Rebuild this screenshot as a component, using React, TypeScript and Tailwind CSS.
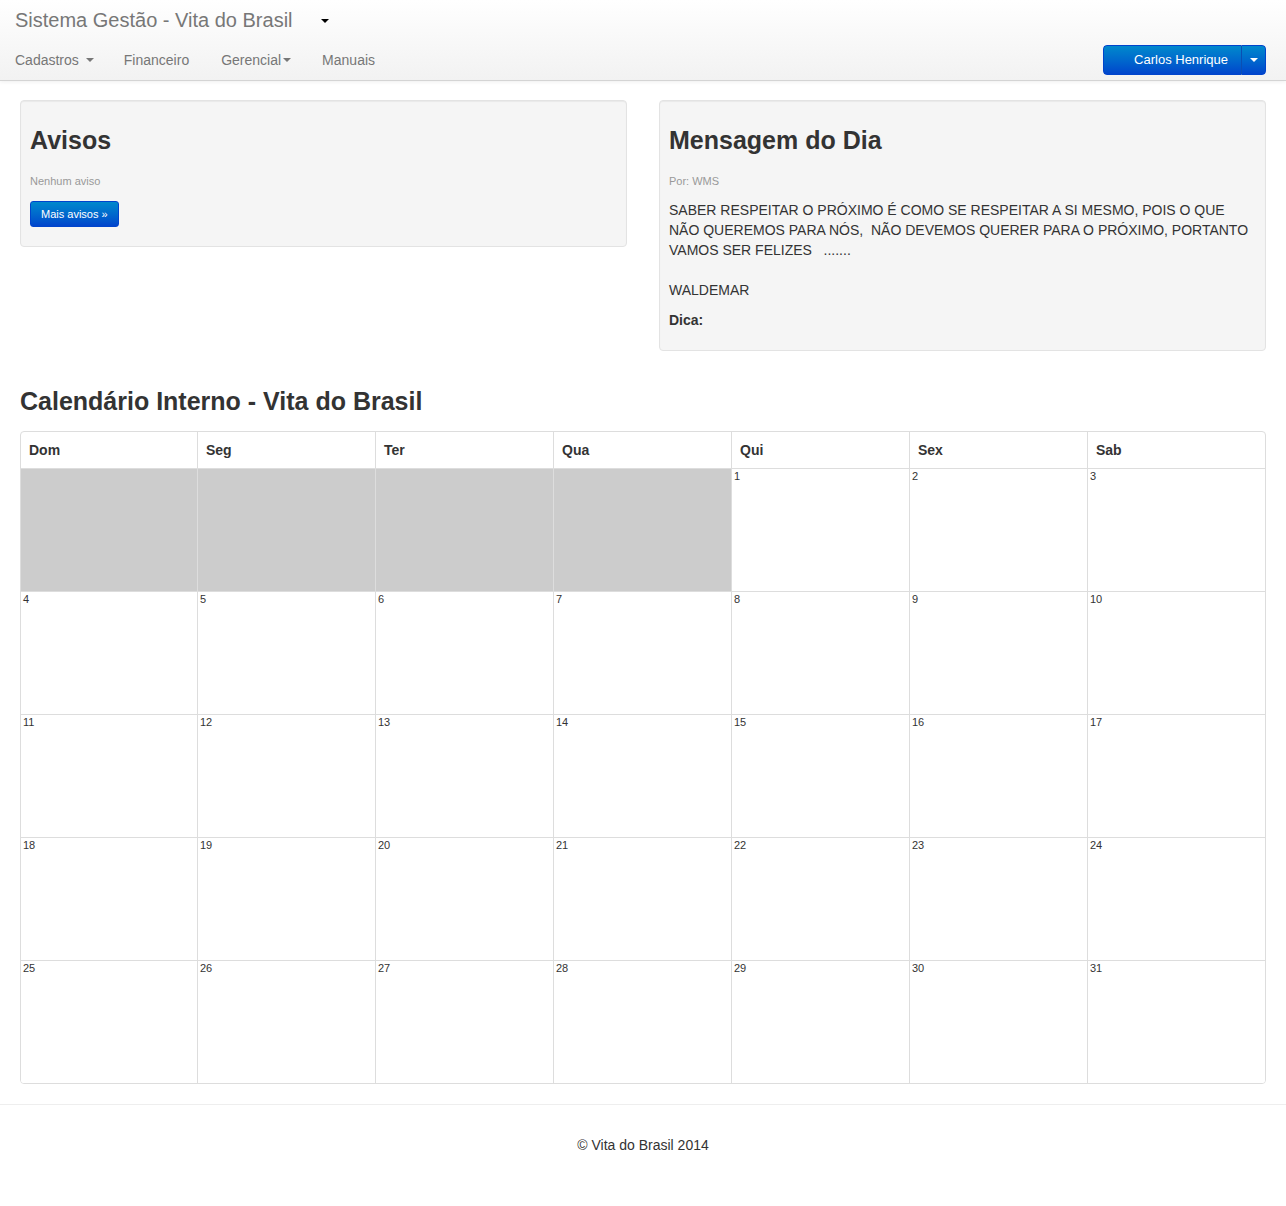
import React from 'react';

const weekDays = ['Dom', 'Seg', 'Ter', 'Qua', 'Qui', 'Sex', 'Sab'];

// month starts on Thursday (4 empty cells), 31 days
const cells: (number | null)[] = [
  null, null, null, null,
  ...Array.from({ length: 31 }, (_, i) => i + 1),
];

function Caret({ className = '' }: { className?: string }) {
  return (
    <span
      className={`inline-block w-0 h-0 border-l-[4px] border-r-[4px] border-t-[4px] border-l-transparent border-r-transparent ${className}`}
    />
  );
}

export default function App() {
  return (
    <div className="min-h-[1206px] bg-white text-[#333] text-[14px] leading-5" style={{ fontFamily: '"Liberation Sans", Arial, sans-serif' }}>
      {/* Navbar */}
      <div className="h-[81px] bg-gradient-to-b from-white to-[#f2f2f2] border-b border-[#d4d4d4] shadow-[0_1px_4px_rgba(0,0,0,0.065)] pl-[15px] pr-[20px]">
        <div className="flex items-center h-[40px]">
          <span className="text-[20px] text-[#777] leading-5">Sistema Gestão - Vita do Brasil</span>
          <Caret className="ml-[28px] mt-[2px] border-t-[#000]" />
        </div>
        <div className="flex items-center justify-between h-[40px]">
          <div className="flex items-center text-[#777] text-[14px]">
            <span className="flex items-center">
              Cadastros <Caret className="ml-[7px] border-t-[#777]" />
            </span>
            <span className="ml-[30px]">Financeiro</span>
            <span className="ml-[32px] flex items-center">
              Gerencial<Caret className="ml-[2px] border-t-[#777]" />
            </span>
            <span className="ml-[31px]">Manuais</span>
          </div>
          <div className="flex h-[30px] mt-[-1px] rounded-[4px] overflow-hidden shadow-[inset_0_1px_0_rgba(255,255,255,0.2)]">
            <div className="w-[138px] flex items-center justify-end pr-[13px] text-[13px] text-white bg-gradient-to-b from-[#0088cc] to-[#0044cc] border border-r-0 border-[#0044cc] rounded-l-[4px]">
              Carlos Henrique
            </div>
            <div className="w-[25px] flex items-center justify-center bg-gradient-to-b from-[#0088cc] to-[#0044cc] border border-[#0044cc] border-l-[#0a4fb3] rounded-r-[4px]">
              <Caret className="border-t-white" />
            </div>
          </div>
        </div>
      </div>

      {/* Content */}
      <div className="px-[20px] pt-[19px]">
        <div className="grid grid-cols-2 gap-[32px] items-start">
          <div className="bg-[#f5f5f5] border border-[#e3e3e3] rounded-[4px] shadow-[inset_0_1px_1px_rgba(0,0,0,0.05)] px-[9px] pt-[24px] pb-[19px]">
            <h2 className="text-[25px] font-bold leading-[30px] text-[#333]">Avisos</h2>
            <p className="text-[11px] text-[#999] mt-[18px] leading-4">Nenhum aviso</p>
            <button className="mt-[12px] h-[26px] px-[10px] text-[11px] text-white rounded-[3px] bg-gradient-to-b from-[#0088cc] to-[#0044cc] border border-[#0044cc]">
              Mais avisos »
            </button>
          </div>
          <div className="bg-[#f5f5f5] border border-[#e3e3e3] rounded-[4px] shadow-[inset_0_1px_1px_rgba(0,0,0,0.05)] px-[9px] pt-[24px] pb-[20px]">
            <h2 className="text-[25px] font-bold leading-[30px] text-[#333]">Mensagem do Dia</h2>
            <p className="text-[11px] text-[#999] mt-[18px] leading-4">Por: WMS</p>
            <p className="mt-[11px] leading-5 whitespace-pre-wrap">
              {'SABER RESPEITAR O PRÓXIMO É COMO SE RESPEITAR A SI MESMO, POIS O QUE NÃO QUEREMOS PARA NÓS,  NÃO DEVEMOS QUERER PARA O PRÓXIMO, PORTANTO VAMOS SER FELIZES   .......'}
            </p>
            <p className="mt-[20px] leading-5">WALDEMAR</p>
            <p className="mt-[10px] leading-5 font-bold">Dica:</p>
          </div>
        </div>

        <h3 className="mt-[35px] text-[25px] font-bold leading-[30px] text-[#333]">Calendário Interno - Vita do Brasil</h3>

        {/* Calendar */}
        <div className="mt-[15px] border border-[#ddd] rounded-[4px] overflow-hidden">
          <div className="grid grid-cols-[176fr_178fr_178fr_178fr_178fr_178fr_178fr]">
            {weekDays.map((d, i) => (
              <div key={d} className={`h-[36px] flex items-center px-[8px] font-bold ${i > 0 ? 'border-l border-[#ddd]' : ''}`}>
                {d}
              </div>
            ))}
          </div>
          <div className="grid grid-cols-[176fr_178fr_178fr_178fr_178fr_178fr_178fr]">
            {cells.map((n, i) => (
              <div
                key={i}
                className={`h-[123px] border-t border-[#ddd] ${i % 7 > 0 ? 'border-l' : ''} ${n === null ? 'bg-[#cccccc]' : 'bg-white'}`}
              >
                {n !== null && <span className="block text-[11px] leading-3 pl-[2px] pt-[1px]">{n}</span>}
              </div>
            ))}
          </div>
        </div>
      </div>

      {/* Footer */}
      <div className="mt-[20px] border-t border-[#eee]" />
      <div className="text-center pt-[30px]">© Vita do Brasil 2014</div>
    </div>
  );
}
